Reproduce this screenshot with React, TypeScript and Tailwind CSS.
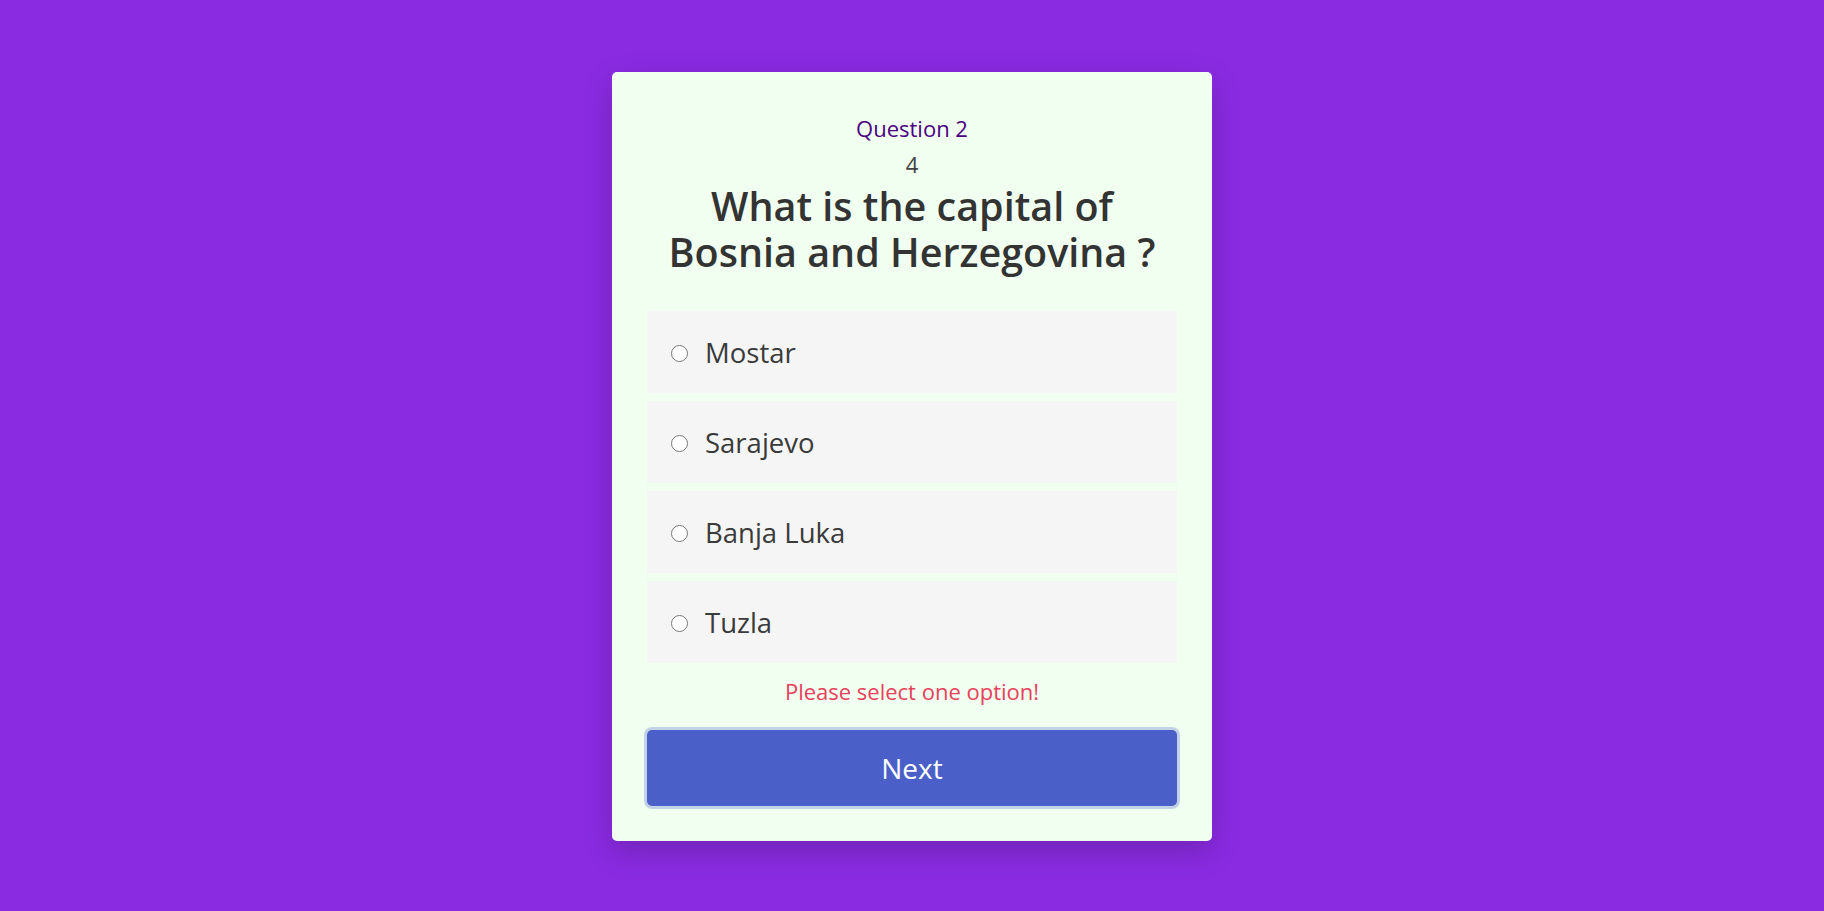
const options = ['Mostar', 'Sarajevo', 'Banja Luka', 'Tuzla'];

export default function App() {
  return (
    <div
      className="flex min-h-screen items-center justify-center bg-[#8a2be2]"
      style={{ fontFamily: '"Open Sans", "Noto Sans", sans-serif' }}
    >
      <div className="mt-[2px] flex w-[600px] flex-col rounded-[5px] bg-[#f0fff0] px-[35px] pb-[35px] pt-[42px] shadow-[0_10px_30px_rgba(0,0,0,0.2)]">
        <div className="text-center text-[22px] leading-[28px] text-[#4b0082]">Question 2</div>
        <div className="mt-[8px] text-center text-[22px] leading-[28px] text-[#444]">4</div>
        <h2 className="mt-[5px] px-[10px] text-center text-[39.5px] font-semibold leading-[46px] text-[#333]">
          What is the capital of Bosnia and Herzegovina ?
        </h2>

        <div className="mt-[36px] flex flex-col gap-[8px]">
          {options.map((opt) => (
            <label
              key={opt}
              className="flex h-[82px] items-center bg-[#f5f5f5] pl-[24px] pt-[2px] text-[27.5px] text-[#3a3a3a]"
            >
              <input type="radio" name="answer" className="m-0 h-[17px] w-[17px]" />
              <span className="ml-[17px]">{opt}</span>
            </label>
          ))}
        </div>

        <div className="mt-[14px] text-center text-[22px] leading-[28px] text-[#e8405a]">
          Please select one option!
        </div>

        <button className="mt-[25px] h-[76px] rounded-[5px] bg-[#4a60c8] text-[28px] text-white ring-[3px] ring-[#c2d3e9]">
          Next
        </button>
      </div>
    </div>
  );
}
